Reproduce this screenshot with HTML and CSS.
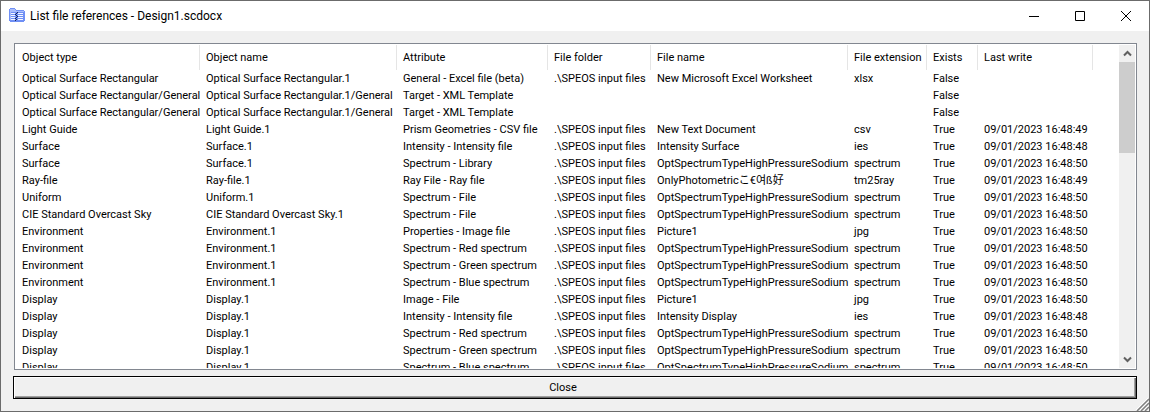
FILE: index.html
```html
<!DOCTYPE html>
<html lang="en">
<head>
  <meta charset="UTF-8">
  <meta name="viewport" content="width=device-width, initial-scale=1.0">
  <link rel="stylesheet" href="styles.css">
  <title>List file references - Design1.scdocx</title>
</head>
<body>

  <header class="titlebar">
    <svg class="app-icon" viewBox="0 0 16 16" aria-hidden="true">
      <path d="M0 1h1V0h5v1h1v1h8v1h1v10h-1v1H1v-1H0z" fill="#6f8ff5"/>
      <path d="M1 1h5v1h1v1h8v1H1zM1 4h1v8H1z" fill="#a9bdfb"/>
      <path d="M2 5h4v1H2zM9 5h5v1H9zM2 7h4v1H2zM9 7h5v1H9zM2 9h4v1H2zM9 9h5v1H9zM2 11h4v1H2zM9 11h5v1H9z" fill="#f4f7ff"/>
      <path d="M8 4h1v1H8zM7 5h1v1H7zM6 6h1v1H6zM7 7h1v1H7zM8 8h1v1H8zM7 9h1v1H7zM6 10h1v1H6zM7 11h1v1H7zM6 12h1v1H6z" fill="#1b2850"/>
    </svg>
    <h1 class="title">List file references - Design1.scdocx</h1>
    <button class="window-button" aria-label="Minimize"><svg class="window-icon" viewBox="0 0 11 11"><path d="M0 5.500h10"/></svg></button>
    <button class="window-button" aria-label="Maximize"><svg class="window-icon" viewBox="0 0 11 11"><path d="M.5 .5h9v9h-9z"/></svg></button>
    <button class="window-button" aria-label="Close window"><svg class="window-icon" viewBox="0 0 11 11"><path d="M0 0l10 10M10 0L0 10"/></svg></button>
  </header>

  <main class="content">
    <div class="list">
      <div class="list-view">
        <table class="files">
          <colgroup>
            <col class="col-type">
            <col class="col-name">
            <col class="col-attribute">
            <col class="col-folder">
            <col class="col-file">
            <col class="col-extension">
            <col class="col-exists">
            <col class="col-write">
          </colgroup>
          <thead>
            <tr><th>Object type</th><th>Object name</th><th>Attribute</th><th>File folder</th><th>File name</th><th>File extension</th><th>Exists</th><th>Last write</th></tr>
          </thead>
          <tbody>
            <tr><td>Optical Surface Rectangular</td><td>Optical Surface Rectangular.1</td><td>General - Excel file (beta)</td><td>.\SPEOS input files</td><td>New Microsoft Excel Worksheet</td><td>xlsx</td><td>False</td><td></td></tr>
            <tr><td>Optical Surface Rectangular/General</td><td>Optical Surface Rectangular.1/General</td><td>Target - XML Template</td><td></td><td></td><td></td><td>False</td><td></td></tr>
            <tr><td>Optical Surface Rectangular/General</td><td>Optical Surface Rectangular.1/General</td><td>Target - XML Template</td><td></td><td></td><td></td><td>False</td><td></td></tr>
            <tr><td>Light Guide</td><td>Light Guide.1</td><td>Prism Geometries - CSV file</td><td>.\SPEOS input files</td><td>New Text Document</td><td>csv</td><td>True</td><td>09/01/2023 16:48:49</td></tr>
            <tr><td>Surface</td><td>Surface.1</td><td>Intensity - Intensity file</td><td>.\SPEOS input files</td><td>Intensity Surface</td><td>ies</td><td>True</td><td>09/01/2023 16:48:48</td></tr>
            <tr><td>Surface</td><td>Surface.1</td><td>Spectrum - Library</td><td>.\SPEOS input files</td><td>OptSpectrumTypeHighPressureSodium</td><td>spectrum</td><td>True</td><td>09/01/2023 16:48:50</td></tr>
            <tr><td>Ray-file</td><td>Ray-file.1</td><td>Ray File - Ray file</td><td>.\SPEOS input files</td><td>OnlyPhotometricこ€여ß好</td><td>tm25ray</td><td>True</td><td>09/01/2023 16:48:49</td></tr>
            <tr><td>Uniform</td><td>Uniform.1</td><td>Spectrum - File</td><td>.\SPEOS input files</td><td>OptSpectrumTypeHighPressureSodium</td><td>spectrum</td><td>True</td><td>09/01/2023 16:48:50</td></tr>
            <tr><td>CIE Standard Overcast Sky</td><td>CIE Standard Overcast Sky.1</td><td>Spectrum - File</td><td>.\SPEOS input files</td><td>OptSpectrumTypeHighPressureSodium</td><td>spectrum</td><td>True</td><td>09/01/2023 16:48:50</td></tr>
            <tr><td>Environment</td><td>Environment.1</td><td>Properties - Image file</td><td>.\SPEOS input files</td><td>Picture1</td><td>jpg</td><td>True</td><td>09/01/2023 16:48:50</td></tr>
            <tr><td>Environment</td><td>Environment.1</td><td>Spectrum - Red spectrum</td><td>.\SPEOS input files</td><td>OptSpectrumTypeHighPressureSodium</td><td>spectrum</td><td>True</td><td>09/01/2023 16:48:50</td></tr>
            <tr><td>Environment</td><td>Environment.1</td><td>Spectrum - Green spectrum</td><td>.\SPEOS input files</td><td>OptSpectrumTypeHighPressureSodium</td><td>spectrum</td><td>True</td><td>09/01/2023 16:48:50</td></tr>
            <tr><td>Environment</td><td>Environment.1</td><td>Spectrum - Blue spectrum</td><td>.\SPEOS input files</td><td>OptSpectrumTypeHighPressureSodium</td><td>spectrum</td><td>True</td><td>09/01/2023 16:48:50</td></tr>
            <tr><td>Display</td><td>Display.1</td><td>Image - File</td><td>.\SPEOS input files</td><td>Picture1</td><td>jpg</td><td>True</td><td>09/01/2023 16:48:50</td></tr>
            <tr><td>Display</td><td>Display.1</td><td>Intensity - Intensity file</td><td>.\SPEOS input files</td><td>Intensity Display</td><td>ies</td><td>True</td><td>09/01/2023 16:48:48</td></tr>
            <tr><td>Display</td><td>Display.1</td><td>Spectrum - Red spectrum</td><td>.\SPEOS input files</td><td>OptSpectrumTypeHighPressureSodium</td><td>spectrum</td><td>True</td><td>09/01/2023 16:48:50</td></tr>
            <tr><td>Display</td><td>Display.1</td><td>Spectrum - Green spectrum</td><td>.\SPEOS input files</td><td>OptSpectrumTypeHighPressureSodium</td><td>spectrum</td><td>True</td><td>09/01/2023 16:48:50</td></tr>
            <tr><td>Display</td><td>Display.1</td><td>Spectrum - Blue spectrum</td><td>.\SPEOS input files</td><td>OptSpectrumTypeHighPressureSodium</td><td>spectrum</td><td>True</td><td>09/01/2023 16:48:50</td></tr>
          </tbody>
        </table>
      </div>
      <div class="scrollbar">
        <button class="scroll-button" aria-label="Scroll up"><svg class="scroll-icon" viewBox="0 0 9 7"><path d="M1 5.500L4.500 2L8 5.500"/></svg></button>
        <div class="thumb"></div>
        <button class="scroll-button scroll-down" aria-label="Scroll down"><svg class="scroll-icon" viewBox="0 0 9 7"><path d="M1 1.500L4.500 5L8 1.500"/></svg></button>
      </div>
    </div>
    <button class="close">Close</button>
  </main>

  <svg class="grip" viewBox="0 0 13 13" aria-hidden="true">
    <path d="M0 12L12 0M4 12l8-8M8 12l4-4" stroke="#fff"/>
    <path d="M1 13L13 1M5 13l8-8M9 13l4-4" stroke="#808080" stroke-width="1.500"/>
  </svg>

</body>
</html>
```

FILE: styles.css
```css
* {
  box-sizing: border-box;
}

body {
  position: relative;
  display: flex;
  flex-direction: column;
  height: 100vh;
  margin: 0;
  border: 1px solid #6b6b6b;
  background-color: #f0f0f0;
  color: #000;
  font-family: Roboto, "Noto Sans CJK JP", "Noto Sans CJK KR", sans-serif;
  font-size: 11px;
}

button {
  padding: 0;
  border: none;
  font: inherit;
  color: inherit;
}

.titlebar {
  display: flex;
  align-items: center;
  flex: none;
  height: 30px;
  padding-left: 8px;
  background-color: #fff;
}

.app-icon {
  width: 16px;
  height: 16px;
  margin-right: 5px;
}

.title {
  flex: 1;
  margin: 0;
  font-size: 12px;
  font-weight: normal;
}

.window-button {
  display: flex;
  align-items: center;
  justify-content: center;
  width: 46px;
  height: 30px;
  background-color: #fff;
}

.window-icon {
  width: 11px;
  height: 11px;
  fill: none;
  stroke: #000;
}

.content {
  display: flex;
  flex: 1;
  flex-direction: column;
  gap: 6px;
  min-height: 0;
  padding: 12px;
}

.list {
  display: flex;
  flex: 1;
  min-height: 0;
  margin-left: 1px;
  padding: 1px;
  border: 1px solid #828790;
  background-color: #fff;
}

.list-view {
  flex: 1;
  overflow: hidden;
}

.files {
  width: 1077px;
  border-collapse: collapse;
  table-layout: fixed;
}

.col-type { width: 184px; }
.col-name { width: 197px; }
.col-attribute { width: 151px; }
.col-folder { width: 103px; }
.col-file { width: 197px; }
.col-extension { width: 79px; }
.col-exists { width: 51px; }
.col-write { width: 115px; }

.files th,
.files td {
  padding: 0 0 0 6px;
  text-align: left;
  font-weight: normal;
  white-space: nowrap;
}

.files th {
  height: 25px;
  box-shadow: inset -1px 0 #e5e5e5;
}

.files td {
  height: 17px;
  line-height: 17px;
}

.scrollbar {
  display: flex;
  flex-direction: column;
  width: 16px;
  background-color: #f0f0f0;
}

.scroll-button {
  display: flex;
  align-items: center;
  justify-content: center;
  height: 17px;
  background-color: #f0f0f0;
}

.scroll-down {
  margin-top: auto;
}

.scroll-icon {
  width: 9px;
  height: 7px;
  fill: none;
  stroke: #606060;
  stroke-width: 2;
}

.thumb {
  height: 91px;
  background-color: #cdcdcd;
}

/* default push button, classic 3D border */
.close {
  flex: none;
  height: 23px;
  padding-right: 24px;
  border: 1px solid #000;
  background-color: #f0f0f0;
  box-shadow: inset 1px 1px #fff, inset -1px -1px #696969, inset -2px -2px #a0a0a0;
}

.grip {
  position: absolute;
  right: 0;
  bottom: 0;
  width: 13px;
  height: 13px;
}
```
